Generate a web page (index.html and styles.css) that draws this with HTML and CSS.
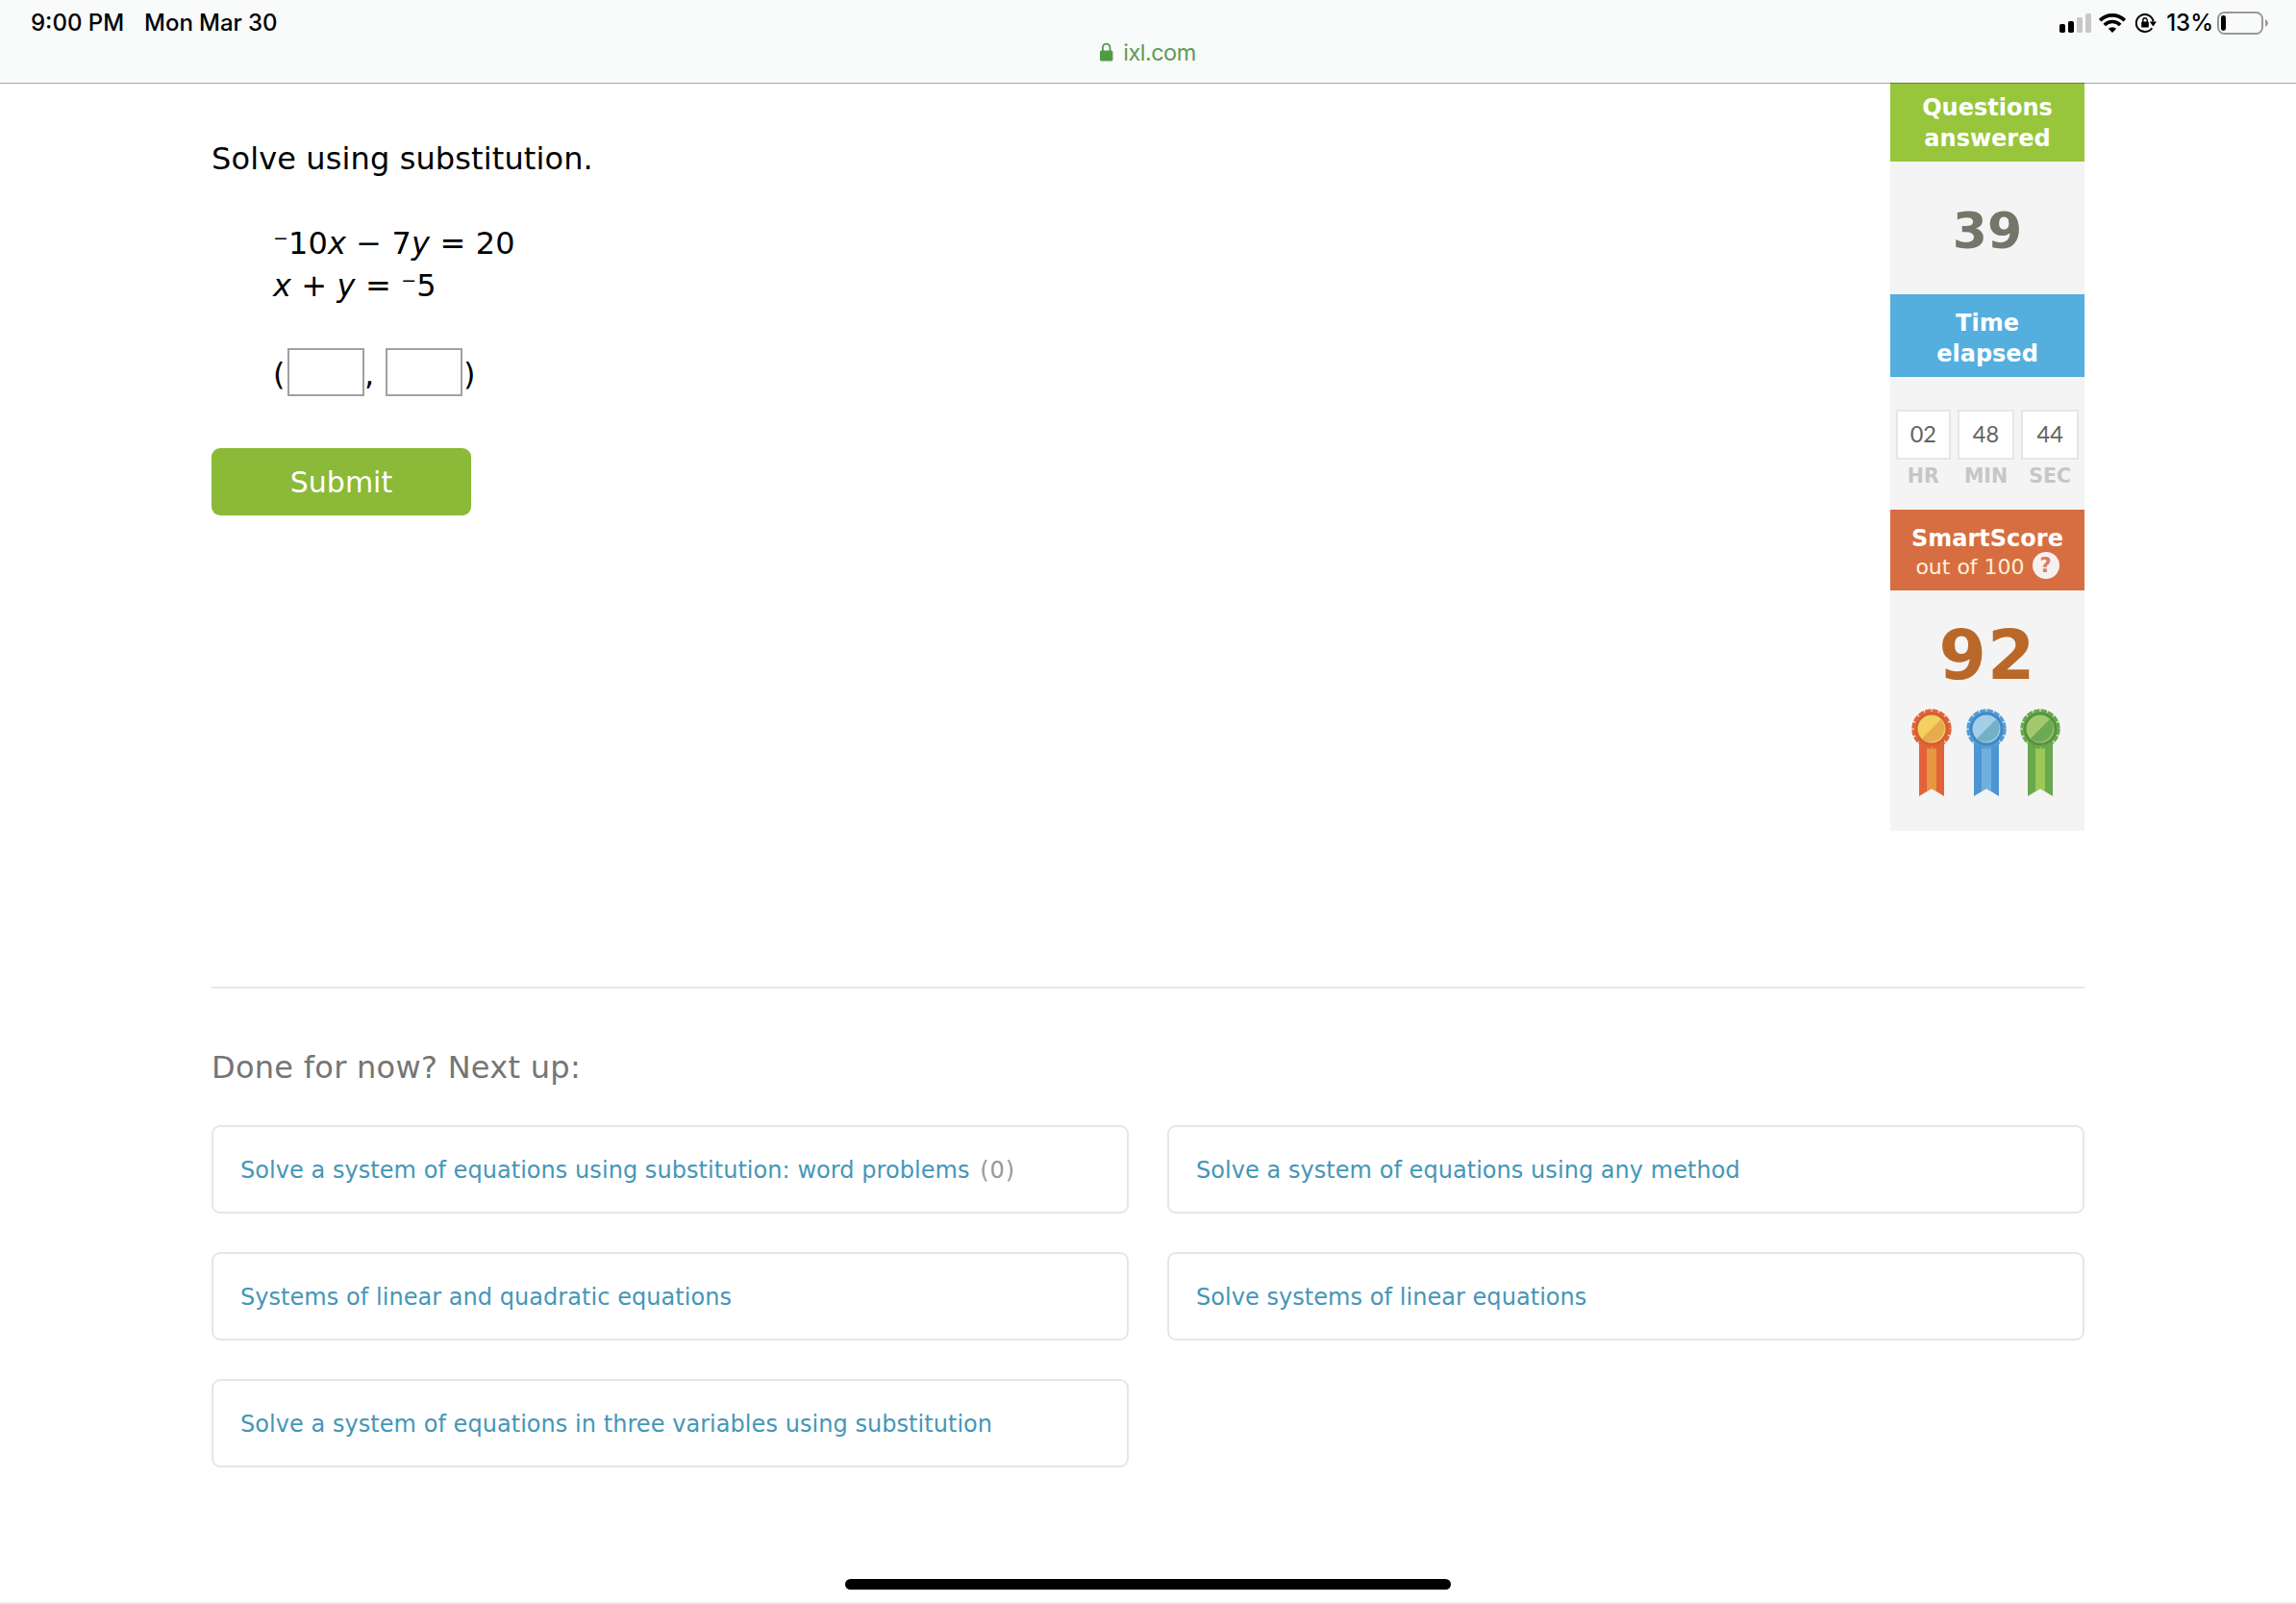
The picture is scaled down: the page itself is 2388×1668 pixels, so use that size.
FILE: index.html
```html
<!DOCTYPE html>
<html lang="en">
<head>
  <meta charset="UTF-8" />
  <meta name="viewport" content="width=device-width, initial-scale=1.0" />
  <title>IXL | Solve a system of equations using substitution</title>
  <link rel="stylesheet" href="styles.css">
</head>
<body>
  <header class="top-bar">
    <div class="status">
      <span class="time">9:00 PM</span>
      <span class="date">Mon Mar 30</span>
      <div class="status-right">
        <svg class="signal" width="34" height="20" viewBox="0 0 34 20">
          <rect x="0" y="11" width="6" height="9" rx="1.8" />
          <rect x="9" y="8" width="6" height="12" rx="1.8" />
          <rect x="18" y="4" width="6" height="16" rx="1.5" fill="#c8c8c8" />
          <rect x="27" y="0" width="6" height="20" rx="1.5" fill="#c8c8c8" />
        </svg>
        <svg class="wifi" width="28" height="20" viewBox="0 0 28 20">
          <g fill="none" stroke="#000" stroke-width="3.6">
            <path d="M1.2 7.2a18 18 0 0 1 25.6 0" />
            <path d="M5.8 11.9a11.5 11.5 0 0 1 16.4 0" />
          </g>
          <path d="M14 20l-4.2-4.2a6.2 6.2 0 0 1 8.4 0z" />
        </svg>
        <svg class="rotation" width="22" height="20" viewBox="0 0 22 20">
          <path d="M17.2 15.2A9 9 0 1 1 18.7 8.5" fill="none" stroke="#000" stroke-width="2" />
          <path d="M14.8 8.4h7.2l-3.6 5z" />
          <rect x="6.2" y="8.6" width="7.6" height="6" rx="0.8" />
          <path d="M7.8 9V7a2.2 2.2 0 0 1 4.4 0v2" fill="none" stroke="#000" stroke-width="1.4" />
        </svg>
        <span class="percent">13%</span>
        <svg class="battery" width="54" height="24" viewBox="0 0 54 24">
          <rect x="1" y="1" width="46" height="22" rx="6.5" fill="none" stroke="#999" stroke-width="2" />
          <rect x="4" y="4" width="5" height="16" rx="2.4" />
          <path d="M50 8q3 1.5 3 4t-3 4z" fill="#999" />
        </svg>
      </div>
    </div>
    <div class="address">
      <svg width="14" height="20" viewBox="0 0 14 20">
        <rect x="0" y="8.5" width="13.4" height="11" rx="1.5" fill="#4f9c45" />
        <path d="M2.9 9V5.4a3.8 3.8 0 0 1 7.6 0V9" fill="none" stroke="#4f9c45" stroke-width="1.8" />
      </svg>
      <span>ixl.com</span>
    </div>
  </header>

  <main class="container">
    <div class="practice">
      <section class="question">
        <p class="prompt">Solve using substitution.</p>
        <div class="math">
          <div><span class="neg">−</span>10<i>x</i> − 7<i>y</i> = 20</div>
          <div><i>x</i> + <i>y</i> = <span class="neg">−</span>5</div>
        </div>
        <div class="answer">
          <span class="paren-open">(</span><input type="text" class="blank" aria-label="x"><span class="comma">,</span><input type="text" class="blank" aria-label="y"><span class="paren-close">)</span>
        </div>
        <button class="submit">Submit</button>
      </section>

      <aside class="scores">
        <div class="score-head green">Questions<br>answered</div>
        <div class="score-body count">39</div>
        <div class="score-head blue">Time<br>elapsed</div>
        <div class="score-body timer">
          <div class="unit hr"><b>02</b><span>HR</span></div>
          <div class="unit"><b>48</b><span>MIN</span></div>
          <div class="unit"><b>44</b><span>SEC</span></div>
        </div>
        <div class="score-head orange">
          SmartScore
          <div class="out-of">out of 100 <span class="help">?</span></div>
        </div>
        <div class="score-body smart">
          <div class="smart-value">92</div>
          <div class="ribbons">
            <svg width="42" height="92" viewBox="0 0 42 92">
              <path d="M8 30h26v61l-13-8-13 8z" fill="#e2633a" />
              <path d="M16 30h10v56l-5-3-5 3z" fill="#e8963f" />
              <circle cx="21" cy="21" r="18" fill="#d2612f" />
              <circle cx="21" cy="21" r="19" fill="none" stroke="#e2633a" stroke-width="3.4" stroke-dasharray="6.4 1.06" />
              <circle cx="21" cy="21" r="14.5" fill="#f3d060" />
              <path d="M31.2 10.8a14.5 14.5 0 0 1-20.4 20.4z" fill="#e5ab4c" />
            </svg>
            <svg width="42" height="92" viewBox="0 0 42 92">
              <path d="M8 30h26v61l-13-8-13 8z" fill="#4e95d2" />
              <path d="M16 30h10v56l-5-3-5 3z" fill="#6fb0de" />
              <circle cx="21" cy="21" r="18" fill="#4189c4" />
              <circle cx="21" cy="21" r="19" fill="none" stroke="#559bd5" stroke-width="3.4" stroke-dasharray="6.4 1.06" />
              <circle cx="21" cy="21" r="14.5" fill="#a5cfe8" />
              <path d="M31.2 10.8a14.5 14.5 0 0 1-20.4 20.4z" fill="#74b1c9" />
            </svg>
            <svg width="42" height="92" viewBox="0 0 42 92">
              <path d="M8 30h26v61l-13-8-13 8z" fill="#6aa84f" />
              <path d="M16 30h10v56l-5-3-5 3z" fill="#9bc957" />
              <circle cx="21" cy="21" r="18" fill="#559340" />
              <circle cx="21" cy="21" r="19" fill="none" stroke="#69a84c" stroke-width="3.4" stroke-dasharray="6.4 1.06" />
              <circle cx="21" cy="21" r="14.5" fill="#a2c96c" />
              <path d="M31.2 10.8a14.5 14.5 0 0 1-20.4 20.4z" fill="#6da852" />
            </svg>
          </div>
        </div>
      </aside>
    </div>

    <section class="next-up">
      <h2>Done for now? Next up:</h2>
      <div class="skills">
        <a class="skill">Solve a system of equations using substitution: word problems <span>(0)</span></a>
        <a class="skill">Solve a system of equations using any method</a>
        <a class="skill">Systems of linear and quadratic equations</a>
        <a class="skill">Solve systems of linear equations</a>
        <a class="skill">Solve a system of equations in three variables using substitution</a>
      </div>
    </section>
  </main>

  <div class="home-indicator"></div>
  <div class="bottom-line"></div>
</body>
</html>
```
FILE: styles.css
```css
* {
  box-sizing: border-box;
}

body {
  margin: 0;
  height: 1668px;
  overflow: hidden;
  display: flex;
  flex-direction: column;
  background-color: #fff;
  color: #000;
  font-family: Verdana, 'DejaVu Sans', sans-serif;
}

svg {
  display: block;
}

/* Status bar */
.top-bar {
  position: relative;
  z-index: 1;
  flex: none;
  height: 86px;
  background-color: #f9fafa;
  box-shadow: 0 1px 0 rgba(0, 0, 0, 0.35);
  font-family: Inter, sans-serif;
  font-size: 24px;
}

.status {
  display: flex;
  align-items: center;
  height: 40px;
  padding: 7px 28px 0 32px;
  font-weight: 500;
}

.date {
  margin-left: 21px;
  letter-spacing: -0.05px;
}

.status-right {
  display: flex;
  align-items: center;
  margin-left: auto;
}

.wifi {
  margin-left: 7px;
}

.rotation {
  margin-left: 10px;
}

.percent {
  margin-left: 10px;
}

.battery {
  margin-left: 4px;
}

.address {
  display: flex;
  justify-content: center;
  align-items: center;
  height: 28px;
  color: #5f9a58;
  font-size: 23.5px;
  letter-spacing: -0.5px;
}

.address span {
  margin-left: 10px;
}

/* Practice area */
.container {
  width: 1948px;
  margin: 0 auto;
}

.practice {
  display: flex;
  justify-content: space-between;
  height: 942px;
  border-bottom: 2px solid #e6e6e6;
}

.question {
  padding-top: 57px;
  font-size: 32px;
  line-height: 44px;
  letter-spacing: 0.12px;
}

.prompt {
  margin: 0 0 44px;
}

.math {
  margin-left: 64px;
}

.neg {
  position: relative;
  top: -10px;
  font-size: 19px;
  line-height: 0;
}

.answer {
  display: flex;
  align-items: center;
  height: 50px;
  margin: 43px 0 54px 64px;
}

.blank {
  width: 80px;
  height: 50px;
  border: 2px solid #a0a0a0;
  border-radius: 0;
  background-color: #fff;
  font-size: 32px;
}

.paren-open,
.comma,
.paren-close {
  padding-top: 4px;
}

.paren-open {
  width: 15px;
}

.comma {
  width: 22px;
}

.paren-close {
  margin-left: 1px;
}

.submit {
  display: block;
  width: 270px;
  height: 70px;
  border: none;
  border-radius: 9px;
  background-color: #8bb938;
  color: #fff;
  font-family: inherit;
  font-size: 30px;
}

/* Score column */
.scores {
  width: 202px;
  text-align: center;
}

.score-head {
  color: #fff;
  font-size: 24px;
  font-weight: bold;
  line-height: 32px;
}

.green {
  height: 82px;
  padding-top: 10px;
  background-color: #97c63d;
}

.blue {
  height: 86px;
  padding-top: 14px;
  background-color: #54aede;
}

.orange {
  height: 84px;
  padding-top: 14px;
  background-color: #d76e41;
}

.out-of {
  display: flex;
  justify-content: center;
  align-items: center;
  height: 28px;
  color: #fff0d8;
  font-size: 22px;
  font-weight: normal;
}

.help {
  width: 28px;
  height: 28px;
  margin: -4px 0 0 8px;
  border-radius: 50%;
  background-color: #f4f1f0;
  color: #dc7c5c;
  font-size: 21px;
  font-weight: bold;
  line-height: 28px;
}

.score-body {
  background-color: #f4f4f4;
}

.count {
  height: 138px;
  padding-top: 3px;
  color: #75756a;
  font-size: 52px;
  font-weight: bold;
  line-height: 138px;
}

.timer {
  display: flex;
  gap: 7px;
  height: 138px;
  padding: 34px 6px 0;
}

.unit {
  width: 60px;
}

.unit.hr {
  width: 57px;
}

.unit b {
  display: block;
  height: 52px;
  border: 2px solid #e6e6e6;
  background-color: #fff;
  color: #62655c;
  font-family: Lato, sans-serif;
  font-size: 23.5px;
  font-weight: normal;
  line-height: 46px;
}

.unit span {
  display: block;
  color: #c5c7c5;
  font-size: 20.5px;
  font-weight: bold;
  line-height: 34px;
}

.smart {
  height: 250px;
}

.smart-value {
  padding-top: 25px;
  color: #b9682a;
  font-size: 71px;
  font-weight: bold;
  line-height: 85px;
  letter-spacing: 1px;
}

.ribbons {
  display: flex;
  gap: 14.5px;
  padding: 13px 0 0 22px;
}

/* Suggested skills */
.next-up h2 {
  margin: 61px 0 38px;
  color: #757575;
  font-size: 32px;
  font-weight: normal;
  line-height: 43px;
  letter-spacing: 0.28px;
}

.skills {
  display: grid;
  grid-template-columns: 1fr 1fr;
  gap: 40px;
}

.skill {
  height: 92px;
  padding-left: 28px;
  border: 2px solid #e6e6e6;
  border-radius: 9px;
  color: #4596b8;
  font-size: 24px;
  line-height: 91px;
  letter-spacing: 0.05px;
}

.skill span {
  margin-left: 3px;
  color: #999;
  letter-spacing: 1px;
}

/* Home indicator */
.home-indicator {
  flex: none;
  width: 630px;
  height: 11px;
  margin: auto auto 13px;
  border-radius: 6px;
  background-color: #000;
}

.bottom-line {
  flex: none;
  height: 2px;
  background-color: #ececec;
}
```
